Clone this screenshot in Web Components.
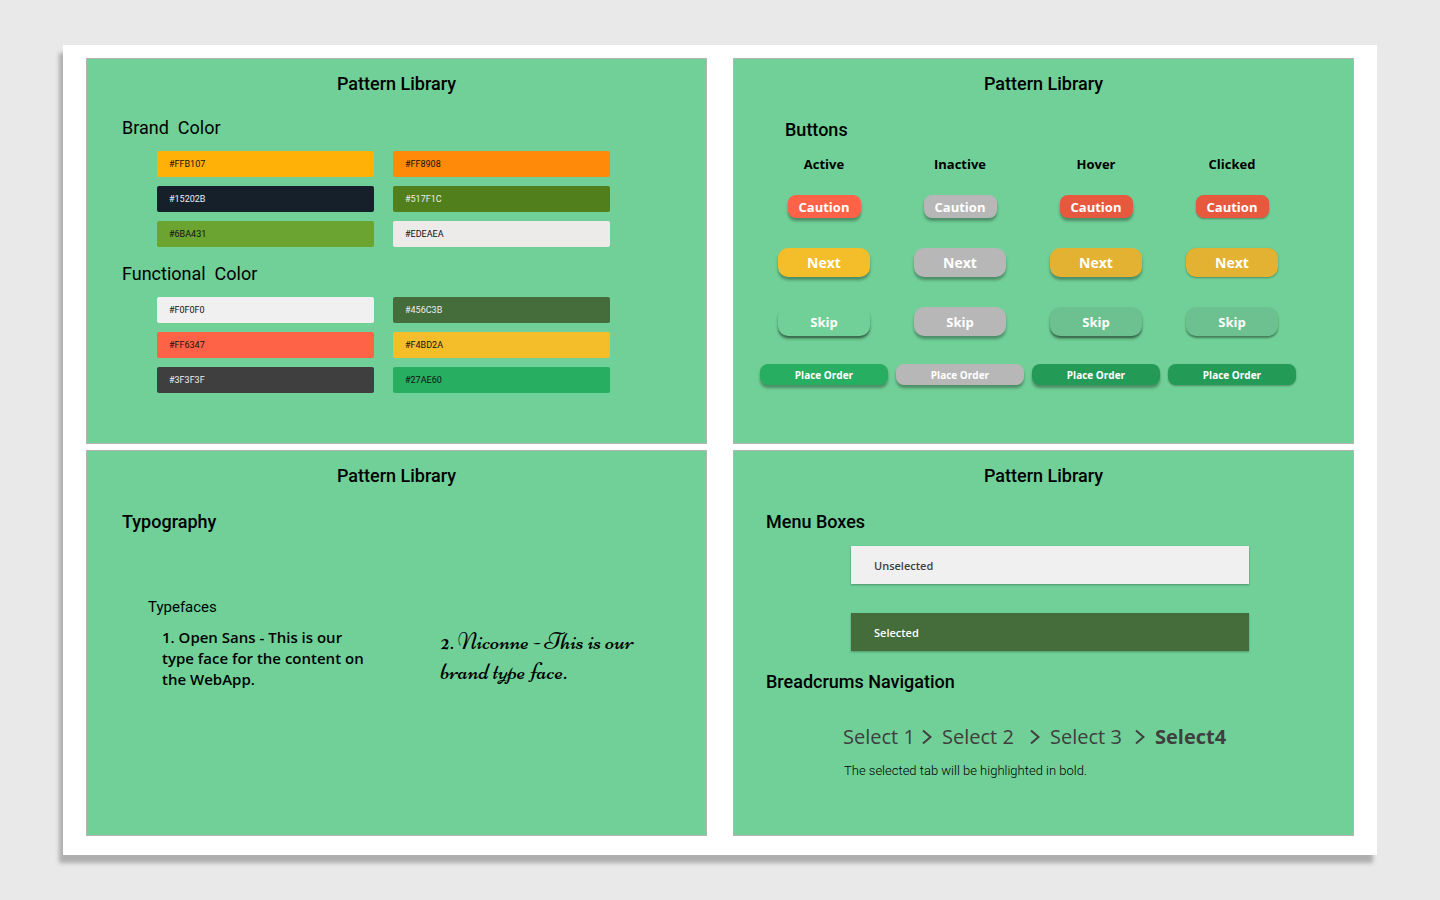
<!DOCTYPE html>
<html lang="en">
<head>
<meta charset="utf-8">
<title>Pattern Library</title>
<style>
  html, body { margin: 0; background: #e9e9e9; }
  body { font-family: Roboto, "Liberation Sans", sans-serif; color: #000; }
</style>
</head>
<body>
<pattern-sheet>
  <pattern-panel>
    <section-heading variant="light" inset="brand">Brand&nbsp; Color</section-heading>
    <color-grid colors="#FFB107 #FF8908 #15202B #517F1C #6BA431 #EDEAEA"></color-grid>
    <section-heading variant="light" inset="brand">Functional&nbsp; Color</section-heading>
    <color-grid colors="#F0F0F0 #456C3B #FF6347 #F4BD2A #3F3F3F #27AE60"></color-grid>
  </pattern-panel>
  <pattern-panel>
    <section-heading inset="buttons">Buttons</section-heading>
    <button-matrix></button-matrix>
  </pattern-panel>
  <pattern-panel>
    <section-heading inset="brand">Typography</section-heading>
    <type-faces>
      <span slot="title">Typefaces</span>
      <span slot="content">1. Open Sans - This is our type face for the content on the WebApp.</span>
      <span slot="brand">2. Niconne - This is our brand type face.</span>
    </type-faces>
  </pattern-panel>
  <pattern-panel>
    <section-heading inset="menu">Menu Boxes</section-heading>
    <menu-boxes></menu-boxes>
    <section-heading inset="menu">Breadcrums Navigation</section-heading>
    <bread-crumbs>The selected tab will be highlighted in bold.</bread-crumbs>
  </pattern-panel>
</pattern-sheet>

<script>
function define(name, html) {
  const template = document.createElement('template');
  template.innerHTML = html;
  customElements.define(name, class extends HTMLElement {
    constructor() {
      super();
      this.attachShadow({ mode: 'open' }).append(template.content.cloneNode(true));
    }
  });
}

define('pattern-sheet', `
  <style>
    :host { display: flex; padding: 45px 63px; box-sizing: border-box; min-height: 100vh; }
    main {
      flex: 1; display: grid; grid-template-columns: 1fr 1fr; grid-auto-rows: 1fr;
      gap: 6px 26px; padding: 13px 23px 19px; background: #fff;
      box-shadow: -4px 8px 4px rgba(0, 0, 0, .25);
    }
  </style>
  <main><slot></slot></main>`);

define('pattern-panel', `
  <style>
    :host { display: block; min-width: 0; background: #70d097; border: 1px solid #b4b4b4; box-sizing: border-box; }
    h1 { margin: 13px 0 19px; font-size: 18px; line-height: 24px; font-weight: 500; text-align: center; }
  </style>
  <h1>Pattern Library</h1>
  <slot></slot>`);

define('section-heading', `
  <style>
    :host { display: block; }
    h2 { margin: 0; font-size: 18px; line-height: 30px; font-weight: 500; }
    :host([variant=light]) h2 { line-height: 26px; font-weight: 400; }
    :host([inset=brand]) { padding-left: 35px; }
    :host([inset=buttons]) { padding-left: 51px; }
    :host([inset=menu]) { padding-left: 32px; }
  </style>
  <h2><slot></slot></h2>`);

customElements.define('color-grid', class extends HTMLElement {
  connectedCallback() {
    const darkFills = ['#15202B', '#517F1C', '#456C3B', '#3F3F3F'];
    const items = this.getAttribute('colors').split(' ').map(c =>
      `<li style="background:${c}"${darkFills.includes(c) ? ' class="dark"' : ''}>${c}</li>`).join('');
    this.attachShadow({ mode: 'open' }).innerHTML = `
      <style>
        :host { display: block; padding: 10px 96px 14px 70px; }
        ul { list-style: none; margin: 0; padding: 0; display: grid; grid-template-columns: 1fr 1fr; gap: 9px 19px; }
        li { padding-left: 12px; font-size: 9px; line-height: 26px; border-radius: 2px; color: #111; }
        .dark { color: #eee; }
      </style>
      <ul>${items}</ul>`;
  }
});

customElements.define('button-matrix', class extends HTMLElement {
  connectedCallback() {
    const states = ['Active', 'Inactive', 'Hover', 'Clicked'];
    const kinds = [['caution', 'Caution'], ['next', 'Next'], ['skip', 'Skip'], ['order', 'Place Order']];
    const rows = kinds.map(([kind, label]) => `<tr class="${kind}">` + states.map(s =>
      `<td><button type="button" class="${s.toLowerCase()}"${s === 'Inactive' ? ' disabled' : ''}>${label}</button></td>`
    ).join('') + '</tr>').join('');
    this.attachShadow({ mode: 'open' }).innerHTML = `
      <style>
        :host { display: block; padding: 7px 53px 0 22px; font-family: "Open Sans", sans-serif; }
        table { width: 100%; table-layout: fixed; border-collapse: collapse; }
        th, td { padding: 0; text-align: center; vertical-align: middle; }
        th { font-size: 13px; line-height: 24px; font-weight: 700; }
        button {
          display: block; margin: 0 auto; padding: 0; border: 0; border-radius: 10px;
          background: var(--fill); color: #fff; font: 700 13px "Open Sans", sans-serif;
          box-shadow: 0 3px 3px rgba(0, 0, 0, .32);
        }
        .hover, .clicked { background: var(--pressed); }
        .clicked { box-shadow: 0 1px 2px rgba(0, 0, 0, .32); }
        .inactive { background: #b7b7b7; }
        .caution { height: 61px; --fill: #ff6347; --pressed: #e6593f; }
        .caution button { width: 73px; height: 23px; border-radius: 8px; }
        .next { height: 50px; --fill: #f4bd2a; --pressed: #e3b233; }
        .next button { width: 92px; height: 29px; font-size: 14px; }
        .skip { height: 69px; --fill: #70d097; --pressed: #6dc190; }
        .skip button { width: 92px; height: 29px; }
        .skip .active, .skip .hover { box-shadow: 0 2px 1px rgba(0, 0, 0, .25), 0 3px 3px rgba(0, 0, 0, .3); }
        .skip .clicked { box-shadow: 0 2px 2px rgba(0, 0, 0, .4); }
        .order { height: 37px; --fill: #27ae60; --pressed: #239b56; }
        .order button { width: 128px; height: 21px; font-size: 10px; border-radius: 8px; }
      </style>
      <table>
        <thead><tr>${states.map(s => `<th scope="col">${s}</th>`).join('')}</tr></thead>
        <tbody>${rows}</tbody>
      </table>`;
  }
});

define('type-faces', `
  <style>
    :host { display: block; padding: 60px 61px 0; }
    h3 { margin: 0; font-size: 15px; line-height: 20px; font-weight: 400; }
    div { display: grid; grid-template-columns: 1fr 1fr; gap: 74px; padding: 10px 0 0 14px; }
    p { margin: 0; }
    .content { font: 600 15px/21px "Open Sans", sans-serif; }
    .brand { font: 400 24px/30px Niconne, "Liberation Serif", serif; }
  </style>
  <h3><slot name="title"></slot></h3>
  <div>
    <p class="content"><slot name="content"></slot></p>
    <p class="brand"><slot name="brand"></slot></p>
  </div>`);

define('menu-boxes', `
  <style>
    :host { display: grid; gap: 29px; padding: 9px 104px 16px 117px; }
    button {
      height: 38px; padding: 0 23px; border: 0; text-align: left; background: #f0f0f0; color: #3f3f3f;
      font: 600 11px "Open Sans", sans-serif; box-shadow: 0 1px 2px rgba(0, 0, 0, .3);
    }
    .selected { background: #456c3b; color: #fff; }
  </style>
  <button type="button">Unselected</button>
  <button type="button" class="selected" aria-pressed="true">Selected</button>`);

define('bread-crumbs', `
  <style>
    :host { display: block; padding: 25px 100px 0 109px; }
    ol {
      list-style: none; margin: 0; padding: 0; display: grid; gap: 10px;
      grid-template-columns: 89px 98px 95px auto; font: 400 20px/30px "Open Sans", sans-serif;
    }
    li { display: flex; align-items: center; justify-content: space-between; white-space: nowrap; }
    a { color: #3f3f3f; text-decoration: none; }
    a[aria-current] { font-weight: 700; }
    svg { width: 10px; height: 16px; fill: none; stroke: #3f3f3f; stroke-width: 2; }
    p { margin: 9px 0 0 1px; font-size: 13px; line-height: 20px; font-weight: 300; }
  </style>
  <nav aria-label="Breadcrumb"><ol>
    <li><a href="#1">Select 1</a><svg viewBox="0 0 10 16" aria-hidden="true"><path d="M1 1.5 8.5 8 1 14.5"/></svg></li>
    <li><a href="#2">Select 2</a><svg viewBox="0 0 10 16" aria-hidden="true"><path d="M1 1.5 8.5 8 1 14.5"/></svg></li>
    <li><a href="#3">Select 3</a><svg viewBox="0 0 10 16" aria-hidden="true"><path d="M1 1.5 8.5 8 1 14.5"/></svg></li>
    <li><a href="#4" aria-current="page">Select4</a></li>
  </ol></nav>
  <p><slot></slot></p>`);
</script>
</body>
</html>
